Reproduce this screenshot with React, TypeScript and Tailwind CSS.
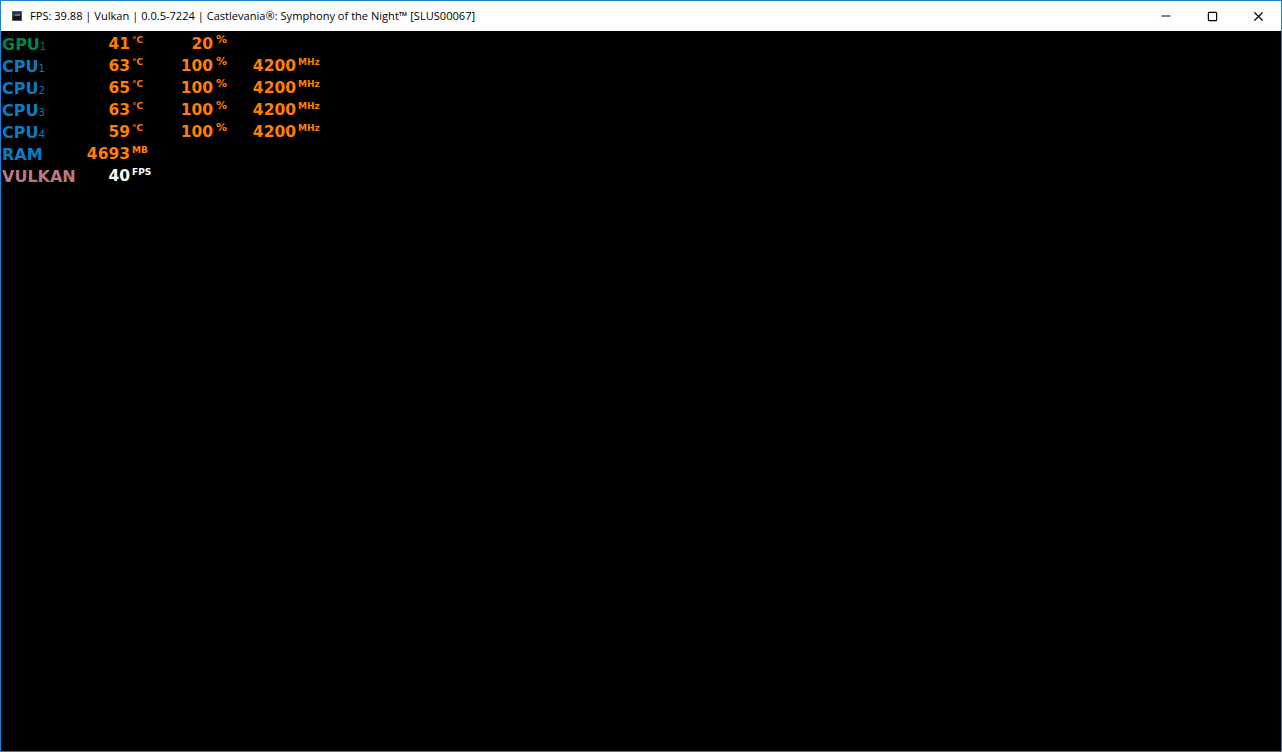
import { Minus, Square, X } from "lucide-react";

type Metric = { value: string; unit: string };
type Row = {
  name: string;
  sub?: string;
  color: string;
  metrics: Metric[];
  white?: boolean;
};

const core = (temp: string): Metric[] => [
  { value: temp, unit: "°C" },
  { value: "100", unit: "%" },
  { value: "4200", unit: "MHz" },
];

const rows: Row[] = [
  {
    name: "GPU",
    sub: "1",
    color: "text-[#00844a]",
    metrics: [
      { value: "41", unit: "°C" },
      { value: "20", unit: "%" },
    ],
  },
  { name: "CPU", sub: "1", color: "text-[#0a7dc2]", metrics: core("63") },
  { name: "CPU", sub: "2", color: "text-[#0a7dc2]", metrics: core("65") },
  { name: "CPU", sub: "3", color: "text-[#0a7dc2]", metrics: core("63") },
  { name: "CPU", sub: "4", color: "text-[#0a7dc2]", metrics: core("59") },
  { name: "RAM", color: "text-[#0a7dc2]", metrics: [{ value: "4693", unit: "MB" }] },
  {
    name: "VULKAN",
    color: "text-[#b87a7c]",
    metrics: [{ value: "40", unit: "FPS" }],
    white: true,
  },
];

function GameIcon() {
  return (
    <svg width="10" height="10" viewBox="0 0 10 10" className="shrink-0">
      <rect width="10" height="10" fill="#55555c" />
      <rect x="1" y="1" width="8" height="4" fill="#22305c" />
      <rect x="3" y="3" width="5" height="2" fill="#8a6a3a" />
      <rect x="1" y="5" width="8" height="4" fill="#121218" />
    </svg>
  );
}

export default function App() {
  return (
    <div className="flex h-[752px] w-[1282px] flex-col overflow-hidden border border-[#1883d7] bg-black">
      {/* Title bar */}
      <div className="flex h-[30px] shrink-0 items-center bg-white font-['Open_Sans','Noto_Sans',sans-serif] text-[11.08px] text-black">
        <div className="ml-[11px] mr-[8px] flex">
          <GameIcon />
        </div>
        <span className="whitespace-nowrap">
          FPS: 39.88 | Vulkan | 0.0.5-7224 | Castlevania®: Symphony of the Night™ [SLUS00067]
        </span>
        <div className="ml-auto flex h-full items-center">
          <div className="flex w-[46px] justify-center">
            <Minus size={14} strokeWidth={1.2} absoluteStrokeWidth />
          </div>
          <div className="flex w-[46px] justify-center">
            <Square size={11} strokeWidth={1.2} absoluteStrokeWidth />
          </div>
          <div className="flex w-[46px] justify-center">
            <X size={15} strokeWidth={1.2} absoluteStrokeWidth />
          </div>
        </div>
      </div>

      {/* OSD */}
      <div className="flex flex-col pl-px pt-[3px] font-['DejaVu_Sans',sans-serif] font-bold">
        {rows.map((row, i) => (
          <div key={i} className="flex h-[22px] items-center">
            <div className={`w-[78px] whitespace-nowrap text-[16px] ${row.color}`}>
              {row.name}
              {row.sub && <span className="text-[10px] font-normal">{row.sub}</span>}
            </div>
            {row.metrics.map((m) => (
              <div key={m.unit} className={`flex ${row.white ? "text-white" : "text-[#ff7f00]"}`}>
                <div className="w-[50px] text-right text-[15.5px]">{m.value}</div>
                <div
                  className={`ml-[2px] w-[31px] pt-[1px] leading-[12px] ${
                    m.unit === "%" ? "pl-px text-[11px]" : "text-[9px]"
                  }`}
                >
                  {m.unit}
                </div>
              </div>
            ))}
          </div>
        ))}
      </div>
    </div>
  );
}
